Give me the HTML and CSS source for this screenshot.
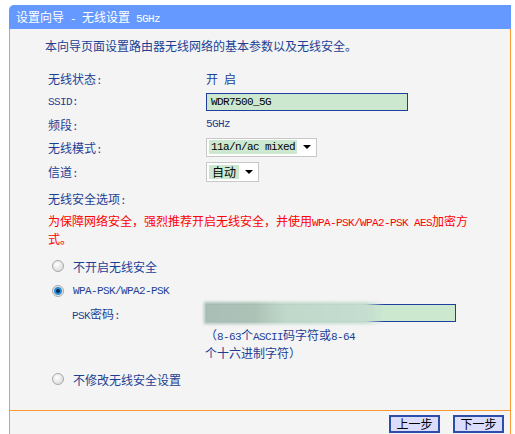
FILE: index.html
```html
<!DOCTYPE html>
<html lang="zh-CN">
<head>
    <meta charset="UTF-8">
    <title>设置向导 - 无线设置 5GHz</title>
    <link rel="stylesheet" href="styles.css">
</head>
<body>
    <div class="wizard">
        <div class="title">设置向导<span class="en"> - </span>无线设置<span class="en"> 5GHz</span></div>
        <div class="panel">
            <p class="intro">本向导页面设置路由器无线网络的基本参数以及无线安全。</p>

            <div class="form">
                <div class="row r1"><span class="label">无线状态<span class="en">:</span></span><span class="value">开<span class="en"> </span>启</span></div>
                <div class="row r2"><span class="label en">SSID:</span><div class="input en">WDR7500_5G</div></div>
                <div class="row r3"><span class="label">频段<span class="en">:</span></span><span class="value en">5GHz</span></div>
                <div class="row r4"><span class="label">无线模式<span class="en">:</span></span>
                    <div class="select mode"><span class="sel en">11a/n/ac mixed</span><i class="arrow"></i></div>
                </div>
                <div class="row r5"><span class="label">信道<span class="en">:</span></span>
                    <div class="select channel"><span class="sel">自动</span><i class="arrow"></i></div>
                </div>
            </div>

            <p class="sec-title">无线安全选项<span class="en">:</span></p>
            <p class="warn">为保障网络安全，强烈推荐开启无线安全，并使用<span class="en">WPA-PSK/WPA2-PSK AES</span>加密方式。</p>

            <div class="opt o1"><i class="radio"></i>不开启无线安全</div>
            <div class="opt o2"><i class="radio on"></i><span class="en">WPA-PSK/WPA2-PSK</span></div>
            <div class="psk">
                <span class="psk-label"><span class="en">PSK</span>密码<span class="en">:</span></span>
                <div class="psk-field">
                    <div class="input wide"></div>
                    <div class="blur"></div>
                </div>
            </div>
            <p class="hint">（<span class="en">8-63</span>个<span class="en">ASCII</span>码字符或<span class="en">8-64</span>个十六进制字符）</p>
            <div class="opt o3"><i class="radio"></i>不修改无线安全设置</div>
        </div>
        <div class="footer">
            <button class="btn">上一步</button>
            <button class="btn">下一步</button>
        </div>
    </div>
</body>
</html>
```

FILE: styles.css
```css
body {
    margin: 0;
    background: #ffffff;
    font-family: "Noto Sans CJK SC", "Liberation Sans", sans-serif;
    font-size: 12px;
    overflow: hidden;
}
p {
    margin: 0;
}
.en {
    font-family: "Liberation Mono", "DejaVu Sans Mono", monospace;
    font-size: 11px;
    letter-spacing: -0.6px;
    line-height: 10px;
    white-space: pre;
}
.warn .en,
.hint .en {
    white-space: normal;
}
.wizard {
    margin: 5px 0 0 9px;
    width: 502px;
}
.title {
    height: 24px;
    line-height: 24px;
    padding-left: 7px;
    background: #6699ff;
    color: #ffffff;
    border-radius: 5px 0 0 0;
}
.panel {
    background: #f4f4f4;
    border-left: 1px solid #ff9933;
    border-right: 1px solid #ff9933;
    padding: 8px 0 20px 38px;
    color: #1c3f94;
}
.intro {
    line-height: 18px;
    margin: 0 0 11px -3px;
}
.row {
    display: flex;
    align-items: center;
}
.r1 { height: 24px; }
.r2 { height: 23px; }
.r3 { height: 22px; }
.r4 { height: 24px; }
.r5 { height: 25px; }
.label {
    width: 158px;
    flex: none;
}
.input {
    box-sizing: border-box;
    width: 202px;
    height: 18px;
    line-height: 16px;
    padding-left: 4px;
    border: 1px solid #1f3f9f;
    background: #cce8cf;
    color: #000000;
}
.input.wide {
    width: 250px;
}
.select {
    box-sizing: border-box;
    display: flex;
    align-items: center;
    border: 1px solid #c8c8c8;
    background: #ffffff;
    padding-left: 2px;
    color: #000000;
}
.select.mode {
    width: 111px;
    height: 19px;
}
.select.channel {
    width: 53px;
    height: 20px;
}
.sel {
    background: #cce8cf;
    line-height: 14px;
    padding: 0 2px;
}
.channel .sel {
    padding: 0 3px;
}
.arrow {
    width: 0;
    height: 0;
    margin-left: auto;
    margin-right: 5px;
    border-left: 4px solid transparent;
    border-right: 4px solid transparent;
    border-top: 4px solid #000000;
}
.sec-title {
    margin-top: 6px;
    line-height: 18px;
}
.warn {
    margin-top: 4px;
    width: 425px;
    line-height: 18px;
    color: #ff0000;
}
.opt {
    display: flex;
    align-items: center;
    padding-left: 4px;
}
.o1 { margin-top: 6px; height: 24px; }
.o2 { height: 25px; }
.o3 { margin-top: 6px; height: 22px; }
.radio {
    box-sizing: border-box;
    width: 12px;
    height: 12px;
    margin-right: 9px;
    border-radius: 50%;
    border: 1px solid #a8a8a8;
    background: radial-gradient(circle at 40% 35%, #ffffff, #d2d2d2);
}
.radio.on {
    background: radial-gradient(circle, #0b2f5c 0 1.5px, #2a8fd8 2.5px 3.5px, #e6e6e6 4.5px);
}
.psk {
    display: flex;
    align-items: center;
    height: 20px;
    padding-left: 24px;
}
.psk-label {
    width: 134px;
    flex: none;
}
.psk-field {
    position: relative;
}
.blur {
    position: absolute;
    left: -2px;
    top: -2px;
    width: 180px;
    height: 22px;
    background: linear-gradient(90deg, #a9bfb7, #adc2b6 28%, #bfd8ca 45%, #c4ddd0 90%, rgba(204, 232, 207, 0));
    filter: blur(1.5px);
}
.hint {
    margin: 3px 0 0 157px;
    width: 155px;
    line-height: 18px;
}
.footer {
    display: flex;
    justify-content: flex-end;
    gap: 13px;
    height: 30px;
    padding: 4px 6px 0 0;
    background: #f4f4f4;
    border-top: 1px solid #ff9933;
    border-left: 1px solid #ff9933;
    border-right: 1px solid #ff9933;
}
.btn {
    box-sizing: border-box;
    width: 51px;
    height: 18px;
    padding: 0;
    border: 2px solid #2c4daa;
    background: #dcdcfc;
    color: #000000;
    font-family: "Noto Sans CJK SC", sans-serif;
    font-size: 12px;
    line-height: 14px;
}
```
